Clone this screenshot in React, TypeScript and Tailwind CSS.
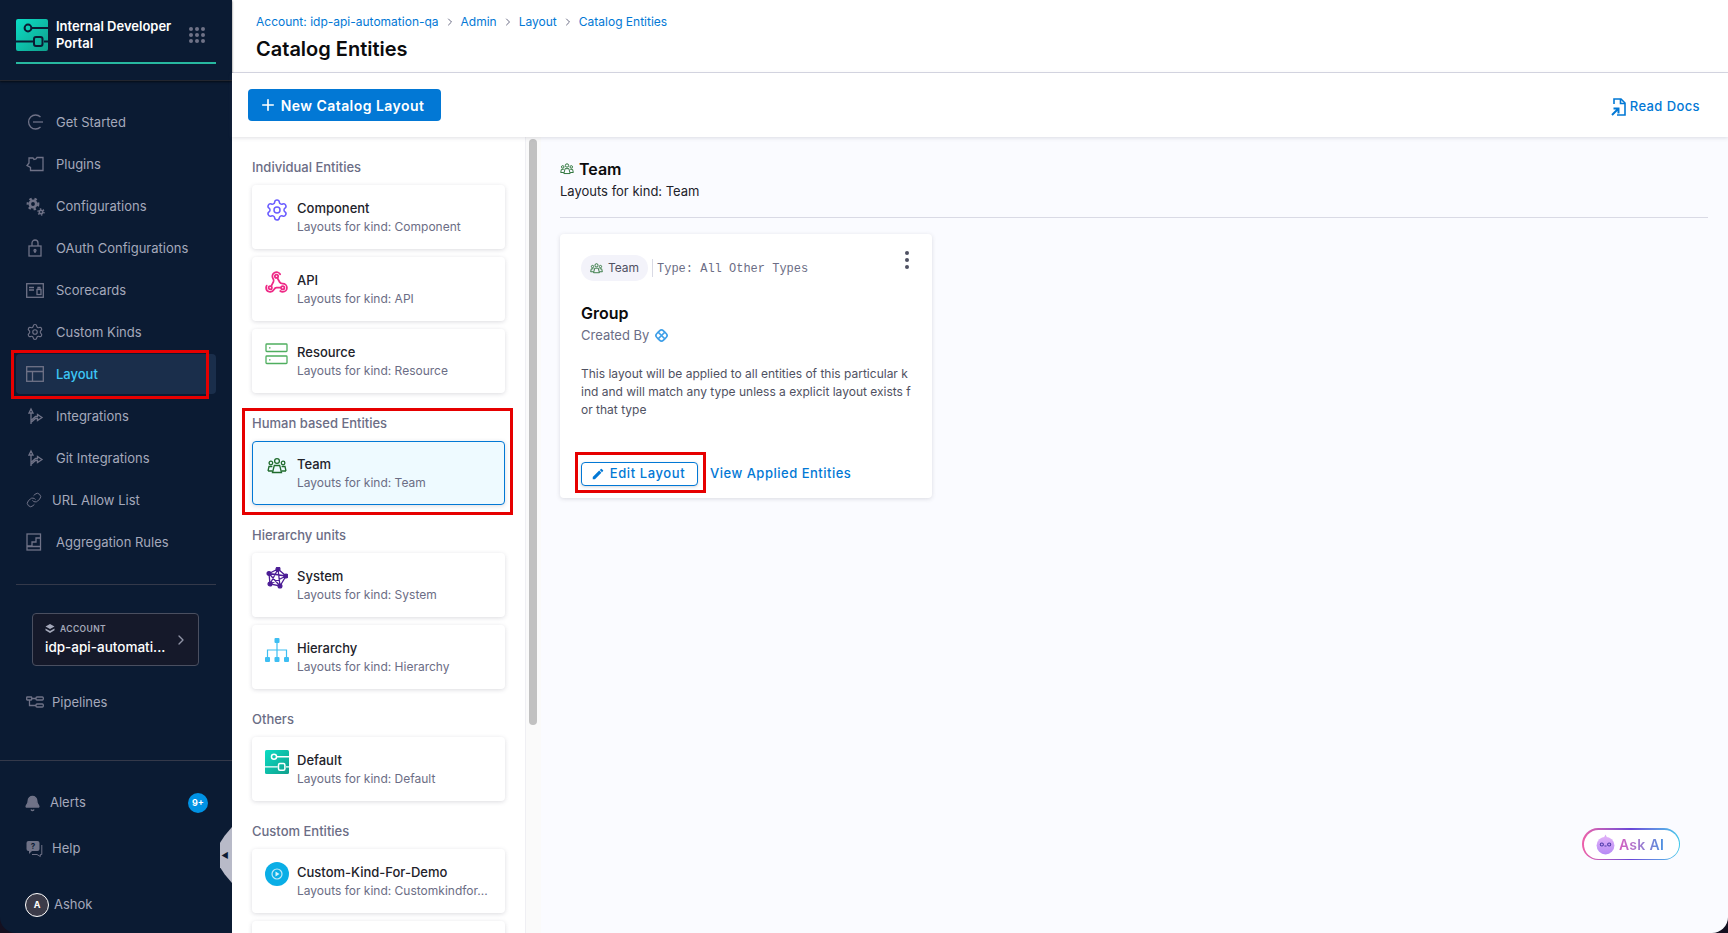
import { Bell, ChevronRight, Link as LinkIcon, Plus, Settings } from 'lucide-react';
import { MdEdit } from 'react-icons/md';
import type { ReactNode } from 'react';

const Logo = ({ size, line = '#0b1b33' }: { size: number; line?: string }) => (
  <svg width={size} height={size} viewBox="0 0 32 32">
    <defs>
      <linearGradient id={`logo${size}`} x1="0" y1="0" x2="1" y2="1">
        <stop offset="0" stopColor="#0bdcc4" />
        <stop offset="1" stopColor="#10a08c" />
      </linearGradient>
    </defs>
    <rect width="32" height="32" rx="2" fill={`url(#logo${size})`} />
    <path d="M0 22.5h17M28 22.5h4M16 9h16" stroke={line} strokeWidth="1.8" fill="none" />
    <circle cx="12" cy="9" r="3.4" fill="none" stroke={line} strokeWidth="2" />
    <rect x="18" y="18" width="8.5" height="9" rx="2" fill="none" stroke={line} strokeWidth="2" />
  </svg>
);

const TeamIcon = ({ size }: { size: number }) => (
  <svg width={size} height={size} viewBox="0 0 20 20" fill="none" stroke="#1f6b2d" strokeWidth="1.3">
    <circle cx="10" cy="5" r="2.4" />
    <circle cx="3.9" cy="7" r="1.8" />
    <circle cx="16.1" cy="7" r="1.8" />
    <path d="M5.5 16.5l1.8-7h5.4l1.8 7z" />
    <path d="M1 15l1-4.5h3.4M19 15l-1-4.5h-3.4M1 15h4.5M19 15h-4.5" />
  </svg>
);

const stroke = { fill: 'none', stroke: '#6f7287', strokeWidth: 1.3 };

const GetStartedIcon = () => (
  <svg width="18" height="18" viewBox="0 0 18 18" {...stroke}>
    <path d="M14.5 4a7 7 0 1 0 0 10" />
    <path d="M7 9h10" />
  </svg>
);
const PluginsIcon = () => (
  <svg width="18" height="16" viewBox="0 0 18 16" {...stroke}>
    <path d="M3 2h4l1 1.5L10 3l1-1.5h6v13H4.5v-3L1 9.5 3 7z" />
  </svg>
);
const ConfigIcon = () => (
  <svg width="19" height="19" viewBox="0 0 19 19" fill="none" stroke="#6f7287">
    <circle cx="7" cy="7" r="3.200" strokeWidth="2.600" />
    <circle cx="7" cy="7" r="5.300" strokeWidth="2.200" strokeDasharray="2.400 2.760" />
    <circle cx="15" cy="15" r="1.700" strokeWidth="1.600" />
    <circle cx="15" cy="15" r="3" strokeWidth="1.400" strokeDasharray="1.500 1.640" />
  </svg>
);
const OAuthIcon = () => (
  <svg width="18" height="18" viewBox="0 0 18 18" {...stroke}>
    <rect x="3" y="7" width="12" height="10" />
    <path d="M6 7V4a3 3 0 0 1 6 0v3" />
    <circle cx="9" cy="11.5" r="1" />
    <path d="M9 12v2" />
  </svg>
);
const ScorecardsIcon = () => (
  <svg width="18" height="15" viewBox="0 0 18 15" {...stroke}>
    <rect x="0.7" y="0.7" width="16.6" height="13.6" />
    <path d="M3 4.5h5M3 7h5" />
    <rect x="11" y="6.5" width="4" height="5" />
    <path d="M12 6.5V4.5h2v2" />
  </svg>
);
const LayoutIcon = () => (
  <svg width="18" height="16" viewBox="0 0 18 16" {...stroke}>
    <rect x="0.7" y="0.7" width="16.6" height="14.6" />
    <path d="M0.7 5.5h16.6M6.5 5.5v9.8" />
  </svg>
);
const IntegrationIcon = () => (
  <svg width="18" height="18" viewBox="0 0 18 18" {...stroke}>
    <path d="M5 17V6M3 6l2-4 2 4zM5.500 13l4-3.500h2V7.500l4.500 3-4.500 3v-2H9.500l-4 3.500" />
  </svg>
);
const AggregationIcon = () => (
  <svg width="16" height="18" viewBox="0 0 16 18" {...stroke}>
    <rect x="1" y="1" width="13.500" height="16" />
    <path d="M1 13h5V9h4V5h4.500M1 13.500h13.500" />
  </svg>
);
const PipelinesIcon = () => (
  <svg width="18" height="12" viewBox="0 0 18 12" {...stroke}>
    <rect x="0.700" y="1" width="5" height="3" rx="0.500" />
    <rect x="10" y="1" width="7.300" height="3" rx="1" />
    <rect x="10" y="8" width="7.300" height="3" rx="1" />
    <path d="M5.700 2.500H10M3.500 4v5.500H10" />
  </svg>
);
const HelpIcon = () => (
  <svg width="18" height="18" viewBox="0 0 18 18">
    <rect x="0.500" y="1" width="13" height="10" rx="2" fill="#6f7287" />
    <path d="M3 11v3l3-3z" fill="#6f7287" />
    <path d="M15.800 5v9.500h-1.500v2L11 14.500H6" fill="none" stroke="#6f7287" />
    <text x="7" y="9" textAnchor="middle" fontSize="8" fontWeight="700" fill="#0b1b33">?</text>
  </svg>
);
const ReadDocsIcon = () => (
  <svg width="15" height="18" viewBox="0 0 15 18" fill="none" stroke="#0278d5" strokeWidth="1.600">
    <path d="M3 6V1h7l4 4v12H6" />
    <path d="M9.500 1v4.500H14" />
    <path d="M1 17l6-6M2.500 10.500H7.500V15.500" strokeWidth="2" />
  </svg>
);
const WebhookIcon = () => (
  <svg width="25" height="25" viewBox="0 0 24 24" fill="none" stroke="#ee2a86" strokeWidth="1.700" strokeLinecap="round">
    <path d="M16.500 17h-4.500c-1.100 0-1.950.94-2.480 1.900A4 4 0 0 1 2 17c.01-.7.2-1.400.57-2" />
    <path d="M7.300 14.800l1.830-3.580c.53-.97.1-2.180-.5-3.100a4 4 0 1 1 6.890-4.060" />
    <path d="M12.800 7.500l2.330 4.230C15.660 12.700 16.900 13 18 13a4 4 0 0 1 0 8c-1 0-1.800-.3-2.400-.8" />
    <circle cx="18" cy="17" r="1.600" />
    <circle cx="6" cy="17" r="1.600" />
    <circle cx="12" cy="6" r="1.600" />
  </svg>
);
const ResourceIcon = () => (
  <svg width="24" height="22" viewBox="0 0 24 22" fill="none" stroke="#4fae5f" strokeWidth="1.300">
    <rect x="1" y="1" width="21" height="7.500" rx="0.800" />
    <rect x="1" y="13" width="21" height="7.500" rx="0.800" />
    <path d="M4 4.800h1.500M4 16.800h1.500" />
  </svg>
);
const SystemIcon = () => (
  <svg width="22" height="22" viewBox="0 0 22 22" fill="#4c1d95" stroke="#4c1d95" strokeWidth="1.300">
    <path d="M3 6.500L12 2l8 7-6 10-10-2zM3 6.500L14 19M12 2L4 17M3 6.500L20 9M4 17l16-8M12 2l2 17" fill="none" />
    <circle cx="3" cy="6.500" r="1.900" />
    <circle cx="12" cy="2" r="1.900" />
    <circle cx="20" cy="9" r="1.900" />
    <circle cx="14" cy="19" r="1.900" />
    <circle cx="4" cy="17" r="1.900" />
  </svg>
);
const HierarchyIcon = () => (
  <svg width="24" height="24" viewBox="0 0 24 24" fill="#3dbef2">
    <rect x="9.500" y="0" width="5" height="5" rx="1" />
    <rect x="0" y="19" width="5" height="5" rx="1" />
    <rect x="9.500" y="19" width="5" height="5" rx="1" />
    <rect x="19" y="19" width="5" height="5" rx="1" />
    <path d="M12 5v14M2.500 19v-7h19v7" fill="none" stroke="#3dbef2" strokeWidth="1.200" />
  </svg>
);
const CustomKindIcon = () => (
  <svg width="24" height="24" viewBox="0 0 24 24">
    <circle cx="12" cy="12" r="12" fill="#0aaee6" />
    <circle cx="12" cy="12" r="5" fill="none" stroke="#bfe9f8" strokeWidth="1.200" />
    <path d="M10.500 9.500l4 2.500-4 2.500z" fill="#d9f3fb" />
  </svg>
);
const HarnessMark = () => (
  <svg width="15" height="15" viewBox="0 0 16 16" fill="none" stroke="#3f9fe8" strokeWidth="1.800">
    <rect x="3" y="3" width="10" height="10" rx="3" transform="rotate(45 8 8)" />
    <path d="M4 4l8 8M12 4l-8 8" />
  </svg>
);
const Mascot = () => (
  <svg width="21" height="21" viewBox="0 0 20 20">
    <defs>
      <linearGradient id="mascot" x1="0" y1="0" x2="0" y2="1">
        <stop offset="0" stopColor="#e0b0f8" />
        <stop offset="1" stopColor="#b68af5" />
      </linearGradient>
    </defs>
    <path d="M10 0.500l1.500 3h-3z" fill="#d8a8f5" />
    <circle cx="10" cy="11" r="8.500" fill="url(#mascot)" />
    <circle cx="6.500" cy="10" r="1.500" fill="none" stroke="#4c3aa8" strokeWidth="1" />
    <circle cx="13.500" cy="10" r="1.500" fill="none" stroke="#4c3aa8" strokeWidth="1" />
    <path d="M9 11.500h2" stroke="#4c3aa8" strokeWidth="1" />
  </svg>
);

const navTop: { label: string; icon: ReactNode; active?: boolean; gap?: string }[] = [
  { label: 'Get Started', icon: <GetStartedIcon /> },
  { label: 'Plugins', icon: <PluginsIcon /> },
  { label: 'Configurations', icon: <ConfigIcon /> },
  { label: 'OAuth Configurations', icon: <OAuthIcon /> },
  { label: 'Scorecards', icon: <ScorecardsIcon /> },
  { label: 'Custom Kinds', icon: <Settings size={18} color="#6f7287" strokeWidth={1.5} /> },
  { label: 'Layout', icon: <LayoutIcon />, active: true },
  { label: 'Integrations', icon: <IntegrationIcon /> },
  { label: 'Git Integrations', icon: <IntegrationIcon /> },
  { label: 'URL Allow List', icon: <LinkIcon size={16} color="#6f7287" strokeWidth={1.5} />, gap: 'w-[26px]' },
  { label: 'Aggregation Rules', icon: <AggregationIcon /> },
];

const NavItem = ({ label, icon, active, gap }: { label: string; icon: ReactNode; active?: boolean; gap?: string }) => (
  <div className={`mx-4 mb-[2px] h-10 flex items-center pl-[10px] rounded ${active ? 'bg-[#1a2e4b]' : ''}`}>
    <span className={`${gap ?? 'w-[30px]'} shrink-0 flex items-center`}>{icon}</span>
    <span className={`pt-px text-[13px] ${active ? 'text-[#3dc7f6] font-medium' : 'text-[#a5a9bb]'}`}>{label}</span>
  </div>
);

const Sidebar = () => (
  <aside className="relative w-[232px] h-full shrink-0 bg-[#0b1b33] flex flex-col">
    <div className="h-[81px] px-4 shrink-0 border-b border-[#23262f] shadow-[0_1px_2px_rgba(0,0,0,0.6)]">
      <div className="h-[64px] border-b-2 border-[#27b8a0] flex items-center pt-[8px]">
        <Logo size={32} />
        <div className="ml-2 w-[124px] text-[13px] leading-[17px] font-semibold text-white">Internal Developer Portal</div>
        <div className="ml-[9px] grid grid-cols-3 gap-[2px]">
          {Array.from({ length: 9 }).map((_, i) => (
            <span key={i} className="size-[4px] rounded-full bg-[#6f7287]" />
          ))}
        </div>
      </div>
    </div>
    <nav className="pt-[21px]">
      {navTop.map((n) => (
        <NavItem key={n.label} {...n} />
      ))}
    </nav>
    <div className="mx-4 mt-5 h-px bg-[#34394a]" />
    <div className="ml-8 mt-[28px] h-[53px] w-[167px] rounded border border-[#4a4f60] bg-[#15192a] flex items-center justify-between pl-[12px] pr-[9px]">
      <div>
        <div className="flex items-center gap-[5px] text-[8.500px] leading-3 font-semibold tracking-[0.4px] text-[#a5a9bb]">
          <svg width="10" height="10" viewBox="0 0 10 10" fill="#a5a9bb">
            <path d="M5 0l4.500 2.500L5 5 0.500 2.500zM0.500 4.500L5 7l4.500-2.500v1.800L5 9 0.500 6.300z" />
          </svg>
          ACCOUNT
        </div>
        <div className="mt-[2px] text-[13.500px] leading-5 font-medium text-white">idp-api-automati...</div>
      </div>
      <ChevronRight size={16} color="#8f93a5" />
    </div>
    <div className="mt-4">
      <NavItem label="Pipelines" icon={<PipelinesIcon />} gap="w-[26px]" />
    </div>
    <div className="mt-[36px] h-px bg-[#34394a]" />
    <div className="mt-[22px]">
      <div className="mx-4 h-10 flex items-center pl-[8px] pr-2">
        <Bell size={17} color="#6f7287" fill="#6f7287" />
        <span className="ml-[9px] flex-1 text-[13px] text-[#a5a9bb]">Alerts</span>
        <span className="size-5 rounded-full bg-[#0092e4] text-white text-[9px] font-bold flex items-center justify-center">9+</span>
      </div>
      <div className="mx-4 mt-[6px] h-10 flex items-center pl-[10px]">
        <HelpIcon />
        <span className="ml-[8px] text-[13px] text-[#a5a9bb]">Help</span>
      </div>
      <div className="mx-4 mt-[16px] h-10 flex items-center pl-[9px]">
        <span className="size-6 rounded-full border border-white bg-[#3b3b49] text-white text-[9px] font-bold flex items-center justify-center">A</span>
        <span className="ml-[5px] text-[13px] text-[#a5a9bb]">Ashok</span>
      </div>
    </div>
    <div className="absolute right-0 top-[827px] h-[56px] w-3 bg-[#b8bac8] [clip-path:polygon(100%_0,100%_100%,40%_85%,0_72%,0_28%,40%_15%)] flex items-center justify-center pr-[2px]">
      <span className="text-[8px] text-[#0b1b33] leading-none">◀</span>
    </div>
  </aside>
);

const cardData = [
  {
    heading: 'Individual Entities',
    cards: [
      { title: 'Component', sub: 'Layouts for kind: Component', icon: <Settings size={24} color="#6a5cff" strokeWidth={1.500} /> },
      { title: 'API', sub: 'Layouts for kind: API', icon: <WebhookIcon /> },
      { title: 'Resource', sub: 'Layouts for kind: Resource', icon: <ResourceIcon /> },
    ],
  },
  {
    heading: 'Human based Entities',
    cards: [{ title: 'Team', sub: 'Layouts for kind: Team', icon: <TeamIcon size={20} />, selected: true }],
  },
  {
    heading: 'Hierarchy units',
    cards: [
      { title: 'System', sub: 'Layouts for kind: System', icon: <SystemIcon /> },
      { title: 'Hierarchy', sub: 'Layouts for kind: Hierarchy', icon: <HierarchyIcon /> },
    ],
  },
  {
    heading: 'Others',
    cards: [{ title: 'Default', sub: 'Layouts for kind: Default', icon: <Logo size={24} line="#ffffff" /> }],
  },
  {
    heading: 'Custom Entities',
    cards: [
      { title: 'Custom-Kind-For-Demo', sub: 'Layouts for kind: Customkindfor...', icon: <CustomKindIcon /> },
      { title: '', sub: '' },
    ],
  },
];

const KindCard = ({ title, sub, icon, selected }: { title: string; sub: string; icon?: ReactNode; selected?: boolean }) => (
  <div
    className={`h-[64px] shrink-0 rounded-[4px] flex shadow-[0_1px_4px_rgba(96,97,112,0.22)] ${
      selected ? 'border border-[#0278d5] bg-[#eefaff] pl-[11px] pt-[12px]' : 'bg-white pl-[12px] pt-[13px]'
    }`}
  >
    <div className="w-[25px] mr-2 shrink-0 flex justify-center">
      <span className="h-6 flex items-center">{icon}</span>
    </div>
    <div>
      <div className="text-[13px] leading-[20px] font-medium text-[#22222a]">{title}</div>
      <div className="text-[12px] leading-[18px] text-[#6b6d85]">{sub}</div>
    </div>
  </div>
);

const KindList = () => (
  <div className="w-[293px] shrink-0 bg-white pl-5 pr-[20px] pt-[21px] overflow-hidden flex flex-col">
    {cardData.map((section, i) => (
      <div key={section.heading} className={i === 0 ? '' : 'mt-[21px]'}>
        <div className="h-[18px] leading-[18px] text-[13px] font-medium text-[#6b6d85]">{section.heading}</div>
        <div className="mt-[9px] flex flex-col gap-2">
          {section.cards.map((c) => (
            <KindCard key={c.title || 'more'} {...c} />
          ))}
        </div>
      </div>
    ))}
  </div>
);

const Scrollbar = () => (
  <div className="w-[16px] shrink-0 bg-[#fafafa] border-l border-[#efeff3] pl-[3px] pt-[2px]">
    <div className="w-2 h-[586px] rounded-full bg-[#c1c1c1]" />
  </div>
);

const Detail = () => (
  <div className="relative flex-1 bg-[#fafbff] pl-[19px] pr-5 pt-[20px]">
    <div className="flex items-center gap-[5px] h-6">
      <TeamIcon size={14} />
      <span className="text-[16px] font-semibold text-[#0b0b0d]">Team</span>
    </div>
    <div className="text-[13px] leading-5 text-[#22222a]">Layouts for kind: Team</div>
    <div className="mt-[16px] h-px bg-[#d9dae5]" />
    <div className="mt-4 w-[372px] h-[264px] rounded-[4px] bg-white shadow-[0_1px_4px_rgba(96,97,112,0.2)] px-[21px] pt-[21px]">
      <div className="flex items-center">
        <span className="h-[26px] w-[67px] rounded-full bg-[#f3f3fa] flex items-center justify-center gap-[5px] text-[12px] text-[#4f5162]">
          <TeamIcon size={13} />
          Team
        </span>
        <span className="ml-[4px] h-[18px] w-px bg-[#d9dae5]" />
        <span className="ml-[4px] pt-[2px] text-[12px] text-[#6b6d85] [font-family:'Liberation_Mono',monospace]">Type: All Other Types</span>
        <span className="ml-auto mr-[2px] -mt-[17px] flex flex-col gap-[3px]">
          <span className="size-[4px] rounded-full bg-[#4f5162]" />
          <span className="size-[4px] rounded-full bg-[#4f5162]" />
          <span className="size-[4px] rounded-full bg-[#4f5162]" />
        </span>
      </div>
      <div className="mt-[20px] text-[16px] leading-6 font-semibold text-[#0b0b0d]">Group</div>
      <div className="flex items-center gap-[5px] text-[13px] leading-5 text-[#6b6d85]">
        Created By <HarnessMark />
      </div>
      <p className="mt-[20px] whitespace-nowrap text-[12px] leading-[18px] text-[#4f5162]">
        This layout will be applied to all entities of this particular k
        <br />
        ind and will match any type unless a explicit layout exists f
        <br />
        or that type
      </p>
      <div className="mt-[43px] flex items-center">
        <button className="h-[24px] w-[117px] rounded-[4px] border border-[#0278d5] bg-white flex items-center justify-center gap-[5px] pr-[3px] text-[13px] font-medium tracking-[0.6px] text-[#0278d5] shadow-[0_1px_3px_rgba(96,97,112,0.25)]">
          <MdEdit size={14} />
          Edit Layout
        </button>
        <span className="ml-3 text-[13px] font-medium tracking-[0.5px] text-[#0278d5]">View Applied Entities</span>
      </div>
    </div>
    <div className="absolute left-[1041px] top-[691px] w-[98px] h-[32px] rounded-full p-[1.500px] bg-gradient-to-r from-[#ee5fa8] via-[#6a45d8] to-[#3fc8ea]">
      <div className="size-full rounded-full bg-white flex items-center justify-center gap-[3px] pr-[3px]">
        <Mascot />
        <span className="text-[14px] font-semibold tracking-[0.3px] bg-gradient-to-r from-[#d45cc0] to-[#3f8de0] bg-clip-text text-transparent">Ask AI</span>
      </div>
    </div>
  </div>
);

const Crumb = ({ children }: { children: ReactNode }) => <span className="text-[#0278d5]">{children}</span>;

const Main = () => (
  <main className="flex-1 min-w-0 h-full flex flex-col">
    <header className="h-[73px] shrink-0 bg-white border-b border-[#d9dae5] pl-6 pt-[13px]">
      <div className="flex items-center gap-[5px] text-[12px] leading-[18px]">
        <Crumb>Account: idp-api-automation-qa</Crumb>
        <ChevronRight size={12} color="#6b6d85" />
        <Crumb>Admin</Crumb>
        <ChevronRight size={12} color="#6b6d85" />
        <Crumb>Layout</Crumb>
        <ChevronRight size={12} color="#6b6d85" />
        <Crumb>Catalog Entities</Crumb>
      </div>
      <h1 className="mt-[4px] text-[20px] leading-7 font-semibold text-[#0b0b0d]">Catalog Entities</h1>
    </header>
    <div className="relative z-10 h-[64px] shrink-0 bg-white pl-4 pr-[28px] flex items-center justify-between shadow-[0_1px_4px_rgba(96,97,112,0.2)]">
      <button className="h-[32px] w-[193px] rounded-[4px] bg-[#0278d5] pr-[6px] text-white text-[14px] font-semibold tracking-[0.45px] flex items-center justify-center gap-[4px]">
        <Plus size={18} strokeWidth={2.200} />
        New Catalog Layout
      </button>
      <div className="pt-[3px] flex items-center gap-[4px] text-[13px] font-medium tracking-[0.4px] text-[#0278d5]">
        <ReadDocsIcon />
        Read Docs
      </div>
    </div>
    <div className="flex-1 min-h-0 flex">
      <KindList />
      <Scrollbar />
      <Detail />
    </div>
  </main>
);

const App = () => (
  <div className="relative w-[1728px] h-[933px] overflow-hidden bg-[#141020] [font-family:Inter,sans-serif]">
    <div className="size-full flex overflow-hidden rounded-b-[16px]">
      <Sidebar />
      <Main />
    </div>
    {/* red annotation boxes from the screenshot */}
    <div className="absolute left-[11px] top-[350px] w-[198px] h-[49px] border-[3px] border-[#e60000]" />
    <div className="absolute left-[242px] top-[408px] w-[271px] h-[107px] border-[3px] border-[#e60000]" />
    <div className="absolute left-[575px] top-[452px] w-[131px] h-[41px] border-[3px] border-[#e60000]" />
  </div>
);

export default App;
